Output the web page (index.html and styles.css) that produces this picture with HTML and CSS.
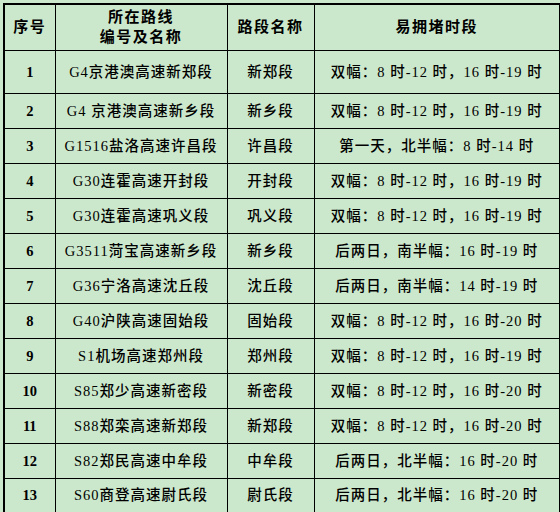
FILE: index.html
```html
<!DOCTYPE html>
<html lang="zh">
<head>
<meta charset="utf-8">
<link rel="stylesheet" href="styles.css">
</head>
<body>
<table class="grid">
  <colgroup>
    <col class="c-no">
    <col class="c-route">
    <col class="c-seg">
    <col class="c-time">
  </colgroup>
  <thead>
    <tr class="head">
      <th>序号</th>
      <th>所在路线<br>编号及名称</th>
      <th>路段名称</th>
      <th>易拥堵时段</th>
    </tr>
  </thead>
  <tbody>
    <tr class="first"><td class="no">1</td><td>G4京港澳高速新郑段</td><td>新郑段</td><td>双幅：8 时-12 时，16 时-19 时</td></tr>
    <tr><td class="no">2</td><td>G4 京港澳高速新乡段</td><td>新乡段</td><td>双幅：8 时-12 时，16 时-19 时</td></tr>
    <tr><td class="no">3</td><td>G1516盐洛高速许昌段</td><td>许昌段</td><td>第一天，北半幅：8 时-14 时</td></tr>
    <tr><td class="no">4</td><td>G30连霍高速开封段</td><td>开封段</td><td>双幅：8 时-12 时，16 时-19 时</td></tr>
    <tr><td class="no">5</td><td>G30连霍高速巩义段</td><td>巩义段</td><td>双幅：8 时-12 时，16 时-19 时</td></tr>
    <tr><td class="no">6</td><td>G3511菏宝高速新乡段</td><td>新乡段</td><td>后两日，南半幅：16 时-19 时</td></tr>
    <tr><td class="no">7</td><td>G36宁洛高速沈丘段</td><td>沈丘段</td><td>后两日，南半幅：14 时-19 时</td></tr>
    <tr><td class="no">8</td><td>G40沪陕高速固始段</td><td>固始段</td><td>双幅：8 时-12 时，16 时-20 时</td></tr>
    <tr><td class="no">9</td><td>S1机场高速郑州段</td><td>郑州段</td><td>双幅：8 时-12 时，16 时-19 时</td></tr>
    <tr><td class="no">10</td><td>S85郑少高速新密段</td><td>新密段</td><td>双幅：8 时-12 时，16 时-20 时</td></tr>
    <tr><td class="no">11</td><td>S88郑栾高速新郑段</td><td>新郑段</td><td>双幅：8 时-12 时，16 时-20 时</td></tr>
    <tr><td class="no">12</td><td>S82郑民高速中牟段</td><td>中牟段</td><td>后两日，北半幅：16 时-20 时</td></tr>
    <tr><td class="no">13</td><td>S60商登高速尉氏段</td><td>尉氏段</td><td>后两日，北半幅：16 时-20 时</td></tr>
  </tbody>
</table>
</body>
</html>
```

FILE: styles.css
```css
html, body {
  margin: 0;
  padding: 0;
  background: #cce8cc;
}
body {
  padding: 3px 0 0 3px;
  font-family: "Liberation Serif", "Noto Sans CJK SC", serif;
  color: #000;
}
.grid {
  border-collapse: collapse;
  table-layout: fixed;
  width: 556px;
  border: 2px solid #000;
}
.c-no { width: 51px; }
.c-route { width: 172px; }
.c-seg { width: 87px; }
.c-time { width: 246px; }
.grid th, .grid td {
  border: 1px solid #000;
  text-align: center;
  vertical-align: middle;
  padding: 0;
  white-space: nowrap;
}
.grid th {
  font-size: 15px;
  font-weight: bold;
  letter-spacing: 1.5px;
  line-height: 20px;
}
.grid td {
  font-size: 14.5px;
  letter-spacing: 1px;
  line-height: 18px;
  font-weight: 500;
}
.grid td.no {
  font-weight: bold;
  letter-spacing: 0;
}
.head { height: 46px; }
tbody tr { height: 35px; }
tbody tr.first { height: 43px; }
```
